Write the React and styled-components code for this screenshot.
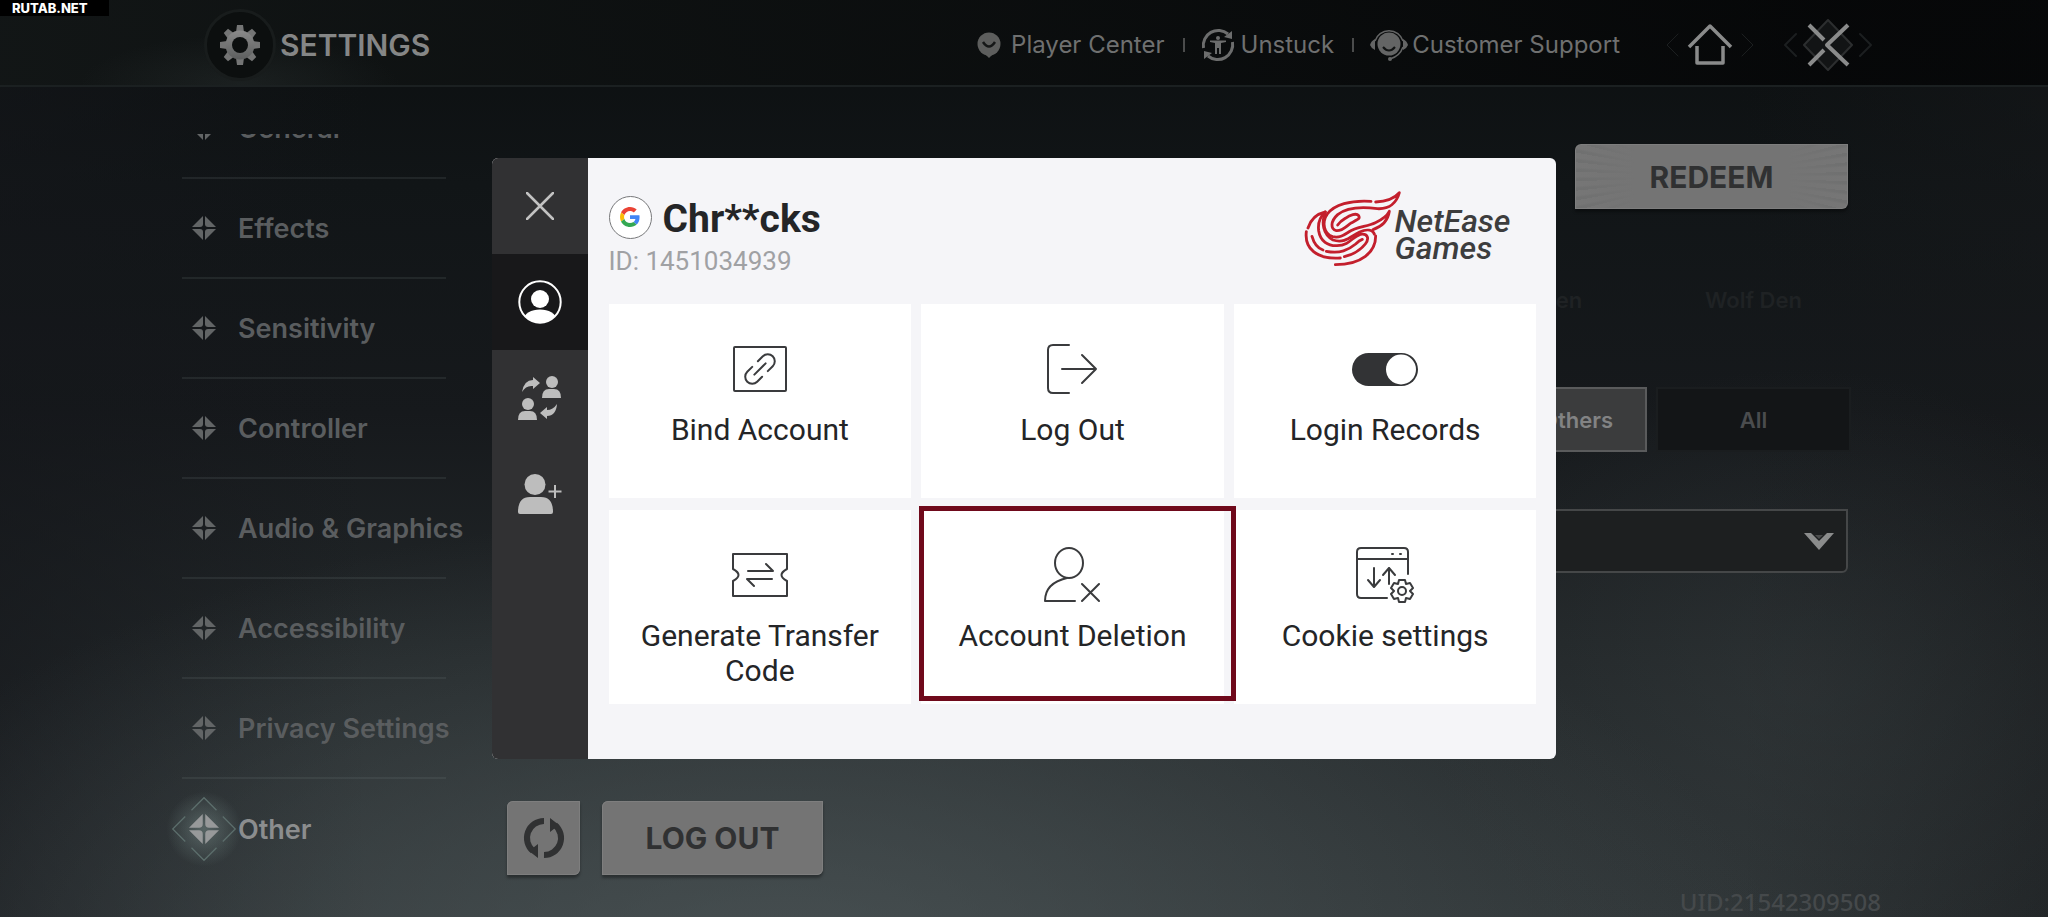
/* --- Packages and Components --- */
import React from 'react';
import styled, { createGlobalStyle } from 'styled-components';

/* --- Data --- */
const navItems = [
  'General',
  'Effects',
  'Sensitivity',
  'Controller',
  'Audio & Graphics',
  'Accessibility',
  'Privacy Settings',
  'Other'
];

/* --- Styles --- */
const GlobalStyle = createGlobalStyle`
  * {
    box-sizing: border-box;
  }

  body {
    margin: 0;
    background: #14181a;
    font-family: Inter, 'Open Sans', sans-serif;
  }

  button,
  select {
    font-family: inherit;
    margin: 0;
    padding: 0;
    border: 0;
    background: none;
  }

  a {
    color: inherit;
    text-decoration: none;
  }

  svg {
    display: block;
    flex: none;
  }
`;

const Page = styled.div`
  position: relative;
  min-height: 100vh;
  display: flex;
  flex-direction: column;
  overflow: hidden;
  color: #616466;
  background: radial-gradient(
      ellipse 1000px 460px at 38% 106%,
      rgba(84, 94, 96, 0.65),
      transparent
    ),
    radial-gradient(
      ellipse 380px 320px at 88% 75%,
      rgba(58, 64, 66, 0.35),
      transparent
    ),
    linear-gradient(90deg, rgba(20, 22, 26, 0.6), transparent 18%),
    linear-gradient(270deg, rgba(22, 24, 26, 0.5), transparent 15%),
    linear-gradient(
      180deg,
      #0b0e0f 0%,
      #111517 20%,
      #16191c 45%,
      #23282a 72%,
      #2f3537 100%
    );
`;

const Watermark = styled.div`
  position: absolute;
  top: 0;
  left: 0;
  width: 109px;
  height: 16px;
  padding-left: 12px;
  background: #000;
  color: #fff;
  font: 800 13px/16px Inter, sans-serif;
`;

const Header = styled.header`
  height: 87px;
  padding: 5px 176px 0 204px;
  display: flex;
  align-items: center;
  border-bottom: 2px solid #1b2021;
  background: radial-gradient(
      ellipse 160px 50px at 240px 100%,
      rgba(70, 80, 80, 0.2),
      transparent
    ),
    linear-gradient(90deg, rgba(18, 22, 22, 0.9), rgba(5, 6, 7, 0.85) 90%);
`;

const GearBadge = styled.span`
  width: 72px;
  height: 72px;
  display: flex;
  align-items: center;
  justify-content: center;
  border: 3px solid #181c1c;
  border-radius: 50%;
  background: #0c0f0f;
`;

const Title = styled.h1`
  flex: 1;
  margin: 0 0 0 4px;
  font-size: 30px;
  line-height: 40px;
  font-weight: 600;
  color: #858686;
`;

const HeaderNav = styled.nav`
  display: flex;
  align-items: center;
  margin-right: 46px;
`;

const HeaderLink = styled.a`
  display: flex;
  align-items: center;
  gap: ${props => props.$gap}px;
  font-size: 24px;
  line-height: 32px;
  color: #6f7070;

  & + & {
    margin-left: 18px;
    padding-left: 18px;
    background: linear-gradient(#4b4c4c, #4b4c4c) left center / 2px 14px
      no-repeat;
  }
`;

const HeaderButtons = styled.div`
  display: flex;
  gap: 30px;
`;

const IconButton = styled.button`
  display: flex;
  align-items: center;
  justify-content: center;
`;

const Main = styled.main`
  flex: 1;
  display: flex;
  padding: 0 200px 0 160px;
`;

const SideNav = styled.nav`
  width: 347px;
  flex: none;
  margin-top: 47px;
  padding-left: 22px;
  overflow: hidden;
`;

const NavList = styled.ul`
  margin: -55px 0 0;
  padding: 0;
  list-style: none;
`;

const NavRow = styled.li`
  width: 264px;
  height: 100px;
  border-bottom: 2px solid rgba(120, 130, 130, 0.16);

  &:last-child {
    border: 0;
  }
`;

const NavLink = styled.a`
  height: 100%;
  display: flex;
  align-items: center;
  white-space: nowrap;
  font-size: 27px;
  font-weight: 600;
  color: ${props => (props.$active ? '#8b8d8e' : '#5a5d5f')};
`;

const NavMark = styled.span`
  width: 44px;
  flex: none;
  margin-right: 12px;
  display: flex;
  align-items: center;
  justify-content: center;

  & > svg {
    overflow: visible;
  }
`;

const Content = styled.div`
  flex: 1;
  min-width: 0;
  display: flex;
  flex-direction: column;
  padding: 57px 0 12px;
`;

const MetalButton = styled.button`
  display: flex;
  align-items: center;
  justify-content: center;
  width: ${props => props.$width}px;
  height: ${props => props.$height}px;
  border-radius: 6px 0;
  background: #747474;
  box-shadow: inset 0 0 0 1px #7e7e7e, 0 3px 3px rgba(0, 0, 0, 0.35);
  color: #303132;
  font-size: 30px;
  font-weight: 700;
`;

const RedeemButton = styled(MetalButton)`
  align-self: flex-end;
  background: linear-gradient(
      90deg,
      rgba(116, 116, 116, 0.3),
      #747474 22%,
      #747474 78%,
      rgba(116, 116, 116, 0.3)
    ),
    repeating-conic-gradient(#6d6e6e 0deg 1deg, #777 2deg 4deg);
`;

const Tabs = styled.div`
  display: grid;
  grid-template-columns: 1fr 195px 195px;
  gap: 9px;
  margin-right: -3px;
`;

const MapTabs = styled(Tabs)`
  margin-top: 58px;
`;

const ScopeTabs = styled(Tabs)`
  margin-top: 55px;
`;

const Tab = styled.button`
  grid-column: ${props => props.$column};
  height: 65px;
  font-size: 22px;
  font-weight: 600;
  color: #1f2224;
`;

const ScopeTab = styled(Tab)`
  color: ${props => (props.$active ? '#828384' : '#4a4c4e')};
  background: ${props => (props.$active ? '#3b3c3d' : '#131517')};
  border: 2px solid ${props => (props.$active ? '#5a5b5c' : '#1a1d1f')};
`;

const SelectWrap = styled.label`
  display: grid;
  align-items: center;
  margin-top: 57px;

  & > * {
    grid-area: 1 / 1;
  }

  & > svg {
    justify-self: end;
    margin-right: 14px;
    pointer-events: none;
  }
`;

const Select = styled.select`
  width: 100%;
  height: 64px;
  appearance: none;
  border: 2px solid #454748;
  border-radius: 0 0 6px 0;
  background: #1d1f20;
  color: #828384;
  font-size: 22px;
`;

const Actions = styled.div`
  display: flex;
  gap: 22px;
  margin-top: auto;
`;

const Uid = styled.footer`
  padding-right: 167px;
  text-align: right;
  font: 500 24px/30px 'Noto Sans', sans-serif;
  color: #45494b;
`;

/* --- Account window --- */
const Overlay = styled.div`
  position: absolute;
  inset: 0;
  display: flex;
  align-items: center;
  justify-content: center;
`;

const Dialog = styled.section`
  width: 52vw;
  min-width: 900px;
  display: flex;
  border-radius: 6px;
  overflow: hidden;
  background: #f5f5f8;
  color: #242527;
  font-family: Roboto, sans-serif;
`;

const DialogRail = styled.div`
  width: 96px;
  flex: none;
  background: #313133;
`;

const RailButton = styled.button`
  width: 100%;
  height: 96px;
  display: flex;
  align-items: center;
  justify-content: center;
  background: ${props => (props.$active ? '#18181a' : 'transparent')};
  color: ${props => (props.$active ? '#fff' : '#bdbdbd')};
`;

const DialogBody = styled.div`
  flex: 1;
  padding: 35px 20px 55px 21px;
`;

const AccountBar = styled.div`
  height: 111px;
  display: flex;
  justify-content: space-between;
`;

const NameRow = styled.div`
  display: flex;
  align-items: center;
  gap: 11px;
  margin-bottom: 5px;
`;

const Avatar = styled.span`
  width: 43px;
  height: 43px;
  display: flex;
  align-items: center;
  justify-content: center;
  border: 1px solid #77787a;
  border-radius: 50%;
  background: #fff;
`;

const UserName = styled.h2`
  margin: 4px 0 0;
  font-size: 39px;
  line-height: 44px;
  font-weight: 700;
`;

const UserId = styled.p`
  margin: 0;
  font-size: 26px;
  line-height: 30px;
  color: #a0a1a4;
`;

const Brand = styled.div`
  display: flex;
  margin: -9px 26px 0 0;
`;

const BrandName = styled.div`
  margin: 24px 0 0 -12px;
  font-size: 32px;
  line-height: 27px;
  font-style: italic;
  font-weight: 500;
  color: #3d3d3e;

  & > span {
    display: block;
  }
`;

const Cards = styled.div`
  display: grid;
  grid-template-columns: repeat(3, 1fr);
  gap: 12px 10px;
`;

const Card = styled.button`
  position: relative;
  min-height: 194px;
  padding: 37px 20px 10px;
  display: flex;
  flex-direction: column;
  align-items: center;
  gap: 15px;
  background: #fff;
  color: #242527;
  font-size: 30px;
  line-height: 35px;
`;

const MarkedCard = styled(Card)`
  z-index: 1;

  &::after {
    content: '';
    position: absolute;
    inset: -4px -12px 3px -2px;
    border: 5px solid #6f091b;
  }
`;

/* --- Icons --- */
const Line = styled.svg`
  fill: none;
  stroke: ${props => props.$color || '#3a3b3d'};
  stroke-width: ${props => props.$weight || 2};
  stroke-linecap: round;
  stroke-linejoin: round;
`;

const GearIcon = () => (
  <svg width="40" height="40" viewBox="-20 -20 40 40">
    <defs>
      <linearGradient id="gear" x1="0" y1="0" x2="0" y2="1">
        <stop offset="0" stopColor="#8a8a8a" />
        <stop offset="1" stopColor="#5c5e5e" />
      </linearGradient>
      <mask id="gearHole">
        <rect x="-20" y="-20" width="40" height="40" fill="#fff" />
        <circle r="8" fill="#000" />
      </mask>
    </defs>
    <g mask="url(#gearHole)" fill="#747575">
      {[0, 45, 90, 135].map(a => (
        <path
          key={a}
          d="M-4-13 L-3-20 H3 L4-13 V13 L3 20 H-3 L-4 13 Z"
          transform={`rotate(${a})`}
        />
      ))}
      <circle r="14.5" fill="url(#gear)" />
    </g>
  </svg>
);

const PlayerIcon = () => (
  <svg width="24" height="26" viewBox="0 0 24 26">
    <circle cx="12" cy="12" r="11.5" fill="#5d5e5d" />
    <path d="M8 22h8l-4 4z" fill="#5d5e5d" />
    <path d="M6 10q6 9 12 0" fill="none" stroke="#151717" strokeWidth="2.5" />
  </svg>
);

const UnstuckIcon = () => (
  <svg width="34" height="34" viewBox="0 0 34 34">
    <g fill="none" stroke="#6c6d6d" strokeWidth="3">
      <path d="M2.500 20A15 15 0 0 1 27 6" />
      <path d="M31.500 14A15 15 0 0 1 7 28" />
    </g>
    <path d="M31 3v8l-8-2zM3 31v-8l8 2z" fill="#6c6d6d" />
    <circle cx="17" cy="10" r="2" fill="#6c6d6d" />
    <path d="M9 12.500h16v1.500l-5 1V26h-2v-6h-2v6h-2V15l-5-1z" fill="#6c6d6d" />
  </svg>
);

const SupportIcon = () => (
  <svg width="38" height="32" viewBox="0 0 38 32">
    <circle cx="19" cy="15" r="11.500" fill="#646565" />
    <path d="M13 18q6 7 12 0" fill="none" stroke="#121414" strokeWidth="2" />
    <path
      d="M5 12A14.500 14 0 0 1 33 12M33 18q-3 9-13 12"
      fill="none"
      stroke="#646565"
      strokeWidth="1.500"
    />
    <path d="M5 10v11q-4-2-5-5 1-4 5-6zM33 10v11q4-2 5-5-1-4-5-6z" fill="#646565" />
    <circle cx="20" cy="30" r="2" fill="#646565" />
  </svg>
);

const HomeIcon = () => (
  <Line width="88" height="52" viewBox="0 0 88 52" $color="#8a8b8b" $weight="3.5">
    <path d="M23 28 44 7l21 21" strokeLinecap="butt" />
    <path d="M31 27v17h26V27" strokeLinecap="butt" />
    <path d="M12 15 1 26l11 11M76 15l11 11-11 11" stroke="#1c1f20" strokeWidth="1" />
  </Line>
);

const ExitIcon = () => (
  <Line width="88" height="52" viewBox="0 0 88 52" $color="#8a8b8b" $weight="4">
    <g strokeWidth="2">
      <path d="M44 1 68 26 44 51 20 26z" stroke="#2c2e2f" fill="#121415" />
      <path d="M12 15 1 26l11 11M76 15l11 11-11 11" stroke="#1c1f20" />
    </g>
    <path d="M64 6 43 26l21 20M25 6l15 15M25 46l15-15" strokeLinecap="butt" />
  </Line>
);

const MarkIcon = ({ active }) => (
  <svg
    width={active ? 30 : 24}
    height={active ? 30 : 24}
    viewBox="-12 -12 24 24"
    fill={active ? '#97999a' : '#626566'}>
    {active && (
      <>
        <defs>
          <radialGradient id="glow">
            <stop offset="0" stopColor="#8fa8a4" stopOpacity="0.4" />
            <stop offset="1" stopColor="#8fa8a4" stopOpacity="0" />
          </radialGradient>
        </defs>
        <circle r="30" fill="url(#glow)" />
        <path
          d="M-10-15 0-25l10 10M-15-10-25 0l10 10M15-10 25 0 15 10M-10 15 0 25l10-10"
          fill="none"
          stroke="#5c6e6c"
        />
      </>
    )}
    {[0, 90, 180, 270].map(a => (
      <path key={a} d="M1-12 12-1H4Q1-1 1-4z" transform={`rotate(${a})`} />
    ))}
  </svg>
);

const RefreshIcon = () => (
  <svg width="42" height="42" viewBox="0 0 42 42">
    <g fill="none" stroke="#303132" strokeWidth="6">
      <path d="M21 4A17 17 0 0 0 10 34" />
      <path d="M21 38A17 17 0 0 0 32 8" />
    </g>
    <path d="M27 1v14l9-7zM15 41V27l-9 7z" fill="#303132" />
  </svg>
);

const CaretIcon = () => (
  <svg width="30" height="17" viewBox="0 0 30 17">
    <path d="M0 0h7l8 8 8-8h7L15 17z" fill="#8b8c8c" />
    <path d="M11 2h8l-4 4z" fill="#4b4c4d" />
  </svg>
);

const CloseIcon = () => (
  <Line width="28" height="28" viewBox="0 0 28 28" $color="#c2c2c2" $weight="2.5">
    <path d="M1 1l26 26M27 1 1 27" />
  </Line>
);

const ProfileIcon = () => (
  <svg width="44" height="44" viewBox="0 0 44 44">
    <defs>
      <clipPath id="face">
        <circle cx="22" cy="22" r="20.5" />
      </clipPath>
    </defs>
    <circle cx="22" cy="22" r="20.7" fill="none" stroke="#fff" strokeWidth="2" />
    <circle cx="22" cy="19" r="9" fill="#fff" />
    <ellipse cx="22" cy="39" rx="16" ry="9.5" fill="#fff" clipPath="url(#face)" />
  </svg>
);

const SwitchIcon = () => (
  <svg width="44" height="44" viewBox="0 0 44 44" fill="currentColor">
    <circle cx="34" cy="6" r="6" />
    <path d="M24 22q0-9 7-9h5q7 0 7 9z" />
    <circle cx="10" cy="28" r="6" />
    <path d="M0 44q0-9 7-9h5q7 0 7 9z" />
    <path d="M4 16Q6 4 15 4V1l7 6-7 6v-3Q8 9 4 16z" />
    <path d="M39 28q-1 12-10 12v3l-7-6 7-6v3q6 0 10-6z" />
  </svg>
);

const AddUserIcon = () => (
  <svg width="44" height="40" viewBox="0 0 44 40" fill="currentColor">
    <circle cx="17" cy="10.5" r="10.5" />
    <path d="M0 38q0-15 12-15h11q12 0 12 15 0 2-2 2H2q-2 0-2-2z" />
    <path d="M30.500 17.500h13M37 11v13" stroke="currentColor" strokeWidth="2" />
  </svg>
);

const GoogleIcon = () => (
  <svg width="20" height="20" viewBox="0 0 48 48">
    <path fill="#EA4335" d="M24 9.500c3.540 0 6.710 1.220 9.210 3.600l6.850-6.850C35.900 2.380 30.470 0 24 0 14.620 0 6.510 5.380 2.560 13.220l7.980 6.190C12.430 13.720 17.740 9.500 24 9.500z" />
    <path fill="#4285F4" d="M46.980 24.550c0-1.570-.15-3.090-.38-4.550H24v9.020h12.940c-.58 2.960-2.260 5.480-4.780 7.180l7.730 6c4.510-4.180 7.090-10.360 7.090-17.650z" />
    <path fill="#FBBC05" d="M10.530 28.590c-.48-1.450-.76-2.990-.76-4.590s.27-3.140.76-4.590l-7.980-6.190C.92 16.460 0 20.120 0 24c0 3.880.92 7.540 2.560 10.780l7.970-6.190z" />
    <path fill="#34A853" d="M24 48c6.480 0 11.930-2.130 15.890-5.810l-7.730-6c-2.150 1.450-4.920 2.300-8.160 2.300-6.260 0-11.570-4.220-13.470-9.910l-7.980 6.190C6.510 42.620 14.620 48 24 48z" />
  </svg>
);

const FlameLogo = () => (
  <Line width="110" height="90" viewBox="0 0 330 270" $color="#c31f2d" $weight="8.5">
    <path d="M222 52C160 48 112 62 91 90c-18 26-10 60 16 68 20 5 34-5 48-14 24-16 56-16 80-28 22-10 34-18 42-34-4 26-22 46-49 55" />
    <path d="M236 54c30-1 54-8 71-28-8 30-30 50-66 48-46-6-92-4-119 18-22 20-22 44-4 48 18 2 30-14 46-24 20-10 26-12 21-21-7-9-26-2-40 8-10 6-18 13-23 20" />
    <path d="M33 132c8-26 26-42 52-48-16 14-23 32-20 56 5 32 28 46 55 45 40-2 44-26 70-34 22-4 28 12 15 29-16 20-38 32-63 38" />
    <path d="M28 143c-6 50 30 84 102 79M45 157c6 22 18 36 33 41M88 202c42 8 66-4 88-22 8-8 14-12 20-14" />
    <path d="M85 84C72 116 78 152 108 168c36 12 54-12 80-24 22-10 38-6 44 6M236 156c0 48-42 86-121 86" />
  </Line>
);

const BindIcon = () => (
  <Line width="56" height="56" viewBox="0 0 56 56">
    <rect x="2" y="6" width="52" height="44" rx="1" />
    <path
      d="M-4 7h-7a7 7 0 0 1 0-14h7M4-7h7a7 7 0 0 1 0 14h-7M-8 0H8"
      transform="translate(28 28) rotate(-45)"
    />
  </Line>
);

const LogOutIcon = () => (
  <Line width="56" height="56" viewBox="0 0 56 56">
    <path d="M25 4H9q-5 0-5 5v38q0 5 5 5h16M18 28h34M38 14l14 14-14 14" />
  </Line>
);

const ToggleIcon = () => (
  <svg width="66" height="56" viewBox="0 0 66 56">
    <rect y="12" width="66" height="33" rx="16.5" fill="#323335" />
    <circle cx="49" cy="28.5" r="15" fill="#fff" />
  </svg>
);

const TransferIcon = () => (
  <Line width="56" height="56" viewBox="0 0 56 56">
    <path d="M1 7h54v15q-11 6 0 12v15H1V34q11-6 0-12z" />
    <path d="M16 24h25l-7-7M40 32H15l7 7" />
  </Line>
);

const DeleteIcon = () => (
  <Line width="56" height="56" viewBox="0 0 56 56">
    <ellipse cx="25" cy="16" rx="14" ry="15" />
    <path d="M23 31Q1 36 1 54h30M38 37l17 17M55 37 38 54" />
  </Line>
);

const CookieIcon = () => (
  <Line width="58" height="56" viewBox="0 0 58 56">
    <path d="M52 27V5q0-4-4-4H5Q1 1 1 5v42q0 4 4 4h26M1 12h51M18 21v19l-6-7M18 40l6-7M33 37V21l-6 7M33 21l6 7" />
    <path d="M36 7h1M44 7h1" />
    <circle cx="46" cy="44" r="4" />
    <path d="M43 33h6l1 4 4-1 3 5-3 3 3 3-3 5-4-1-1 4h-6l-1-4-4 1-3-5 3-3-3-3 3-5 4 1z" />
  </Line>
);

const cards = [
  { label: 'Bind Account', icon: <BindIcon /> },
  { label: 'Log Out', icon: <LogOutIcon /> },
  { label: 'Login Records', icon: <ToggleIcon /> },
  { label: 'Generate Transfer Code', icon: <TransferIcon /> },
  { label: 'Account Deletion', icon: <DeleteIcon />, marked: true },
  { label: 'Cookie settings', icon: <CookieIcon /> }
];

/* --- Components --- */
const TopBar = () => (
  <Header>
    <GearBadge>
      <GearIcon />
    </GearBadge>
    <Title>SETTINGS</Title>
    <HeaderNav>
      <HeaderLink href="#player" $gap={10}>
        <PlayerIcon />
        Player Center
      </HeaderLink>
      <HeaderLink href="#unstuck" $gap={6}>
        <UnstuckIcon />
        Unstuck
      </HeaderLink>
      <HeaderLink href="#support" $gap={4}>
        <SupportIcon />
        Customer Support
      </HeaderLink>
    </HeaderNav>
    <HeaderButtons>
      <IconButton aria-label="Home">
        <HomeIcon />
      </IconButton>
      <IconButton aria-label="Exit">
        <ExitIcon />
      </IconButton>
    </HeaderButtons>
  </Header>
);

const AccountWindow = () => (
  <Overlay>
    <Dialog role="dialog" aria-label="Account">
      <DialogRail>
        <RailButton aria-label="Close">
          <CloseIcon />
        </RailButton>
        <RailButton aria-label="Profile" $active>
          <ProfileIcon />
        </RailButton>
        <RailButton aria-label="Switch account">
          <SwitchIcon />
        </RailButton>
        <RailButton aria-label="Add account">
          <AddUserIcon />
        </RailButton>
      </DialogRail>
      <DialogBody>
        <AccountBar>
          <div>
            <NameRow>
              <Avatar>
                <GoogleIcon />
              </Avatar>
              <UserName>Chr**cks</UserName>
            </NameRow>
            <UserId>ID: 1451034939</UserId>
          </div>
          <Brand>
            <FlameLogo />
            <BrandName>
              <span>NetEase</span>
              <span>Games</span>
            </BrandName>
          </Brand>
        </AccountBar>
        <Cards>
          {cards.map(card => {
            const Tile = card.marked ? MarkedCard : Card;
            return (
              <Tile key={card.label}>
                {card.icon}
                {card.label}
              </Tile>
            );
          })}
        </Cards>
      </DialogBody>
    </Dialog>
  </Overlay>
);

class App extends React.Component {
  constructor(props) {
    super(props);
    this.state = { active: 'Other' };
  }

  render() {
    const { active } = this.state;

    return (
      <Page>
        <GlobalStyle />
        <TopBar />
        <Main>
          <SideNav>
            <NavList>
              {navItems.map(item => (
                <NavRow key={item}>
                  <NavLink
                    href="#settings"
                    $active={item === active}
                    onClick={() => this.setState({ active: item })}>
                    <NavMark>
                      <MarkIcon active={item === active} />
                    </NavMark>
                    {item}
                  </NavLink>
                </NavRow>
              ))}
            </NavList>
          </SideNav>
          <Content>
            <RedeemButton $width={273} $height={65}>
              REDEEM
            </RedeemButton>
            <MapTabs>
              <Tab $column={2}>Raven</Tab>
              <Tab $column={3}>Wolf Den</Tab>
            </MapTabs>
            <ScopeTabs>
              <ScopeTab $column={2} $active>
                With Others
              </ScopeTab>
              <ScopeTab $column={3}>All</ScopeTab>
            </ScopeTabs>
            <SelectWrap>
              <Select aria-label="Option" />
              <CaretIcon />
            </SelectWrap>
            <Actions>
              <MetalButton $width={73} $height={74} aria-label="Refresh">
                <RefreshIcon />
              </MetalButton>
              <MetalButton $width={221} $height={74}>
                LOG OUT
              </MetalButton>
            </Actions>
          </Content>
        </Main>
        <Uid>UID:21542309508</Uid>
        <AccountWindow />
        <Watermark>RUTAB.NET</Watermark>
      </Page>
    );
  }
}

export default App;
